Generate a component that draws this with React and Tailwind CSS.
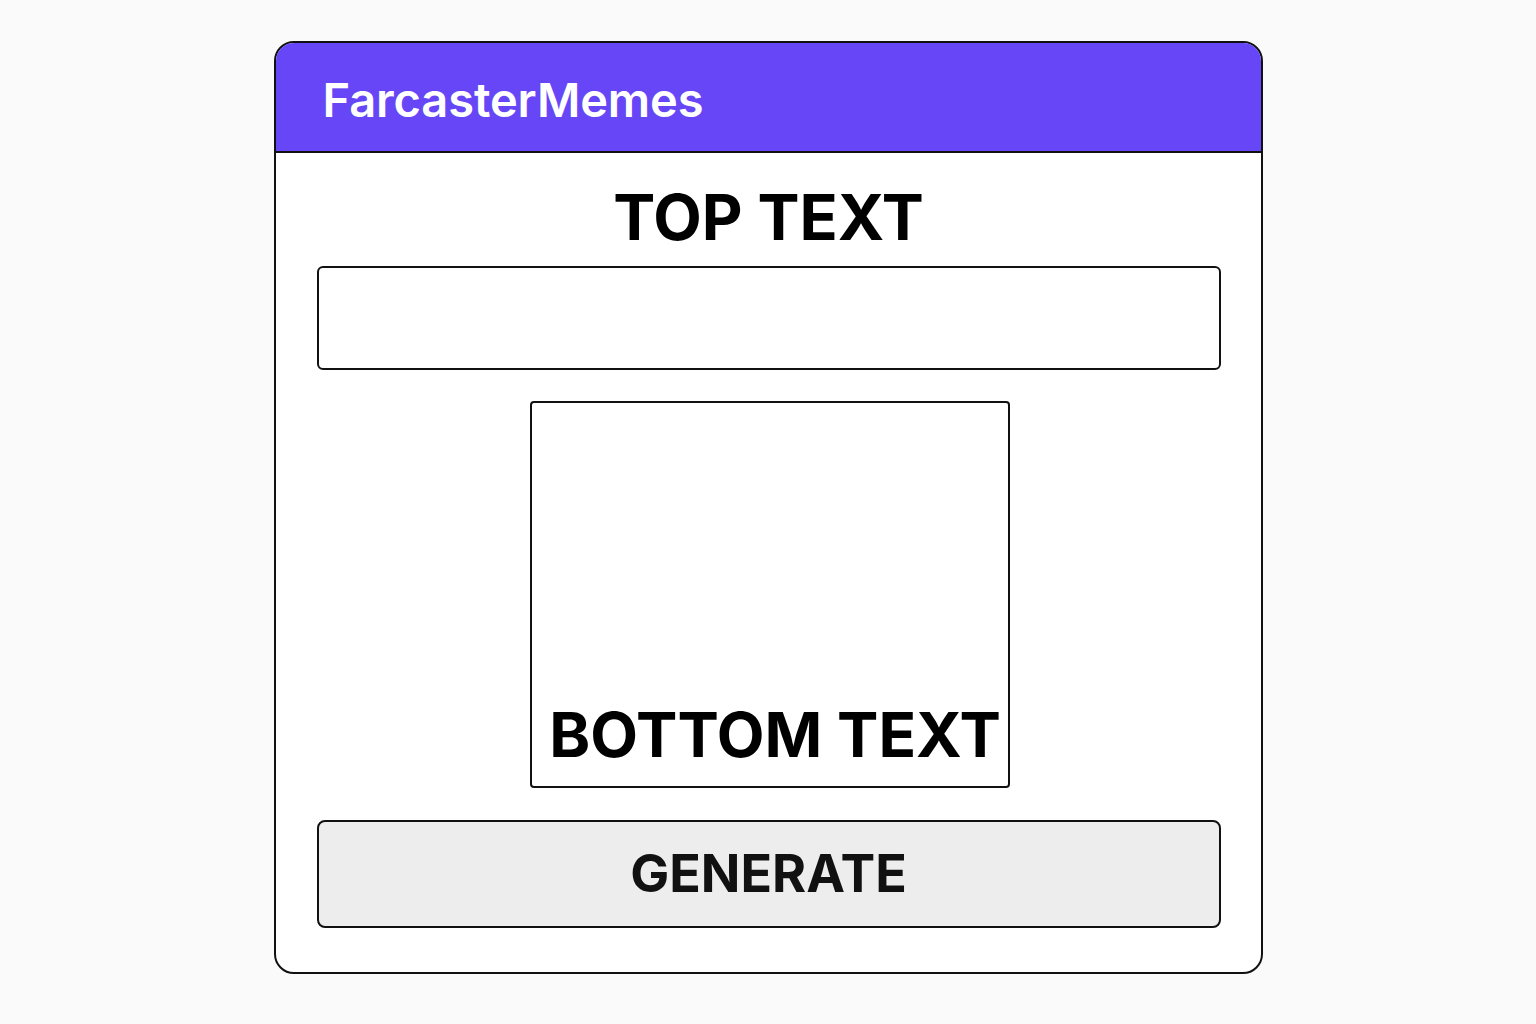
import React, { useState } from 'react';

const App = () => {
  const [topText, setTopText] = useState('');

  return (
    <div className="min-h-screen w-full bg-[#fafafa] pt-[41px] font-['Inter','Liberation_Sans',sans-serif]">
      <div className="mx-auto w-[989px] overflow-hidden rounded-[20px] border-2 border-[#111] bg-white">
        {/* Header */}
        <div className="flex h-[110px] items-center border-b-2 border-[#111] bg-[#6646f6] pl-[47px] pt-[4px]">
          <h1 className="text-[47px] font-semibold leading-none tracking-[-0.1px] text-white">FarcasterMemes</h1>
        </div>

        {/* Body */}
        <div className="flex flex-col pb-[44px] pl-[41px] pr-[40px] pt-[33px]">
          <p className="text-center text-[63px] font-bold leading-none text-black">TOP TEXT</p>

          <input
            value={topText}
            onChange={(e) => setTopText(e.target.value)}
            className="mt-[17px] h-[104px] w-full rounded-[6px] border-2 border-[#111] bg-white px-4 text-2xl outline-none"
          />

          {/* Meme preview */}
          <div className="mt-[31px] flex justify-center">
            <div className="ml-[3px] flex h-[387px] w-[480px] items-end justify-center rounded-[4px] border-2 border-[#111] bg-white pb-[20px] pl-[10px]">
              <p className="text-[62px] font-bold leading-none text-black">BOTTOM TEXT</p>
            </div>
          </div>

          <button className="mt-[32px] flex h-[108px] w-full items-center justify-center rounded-[8px] border-2 border-[#111] bg-[#ededed]">
            <span className="text-[52px] font-bold leading-none text-[#111]">GENERATE</span>
          </button>
        </div>
      </div>
    </div>
  );
};

export default App;
